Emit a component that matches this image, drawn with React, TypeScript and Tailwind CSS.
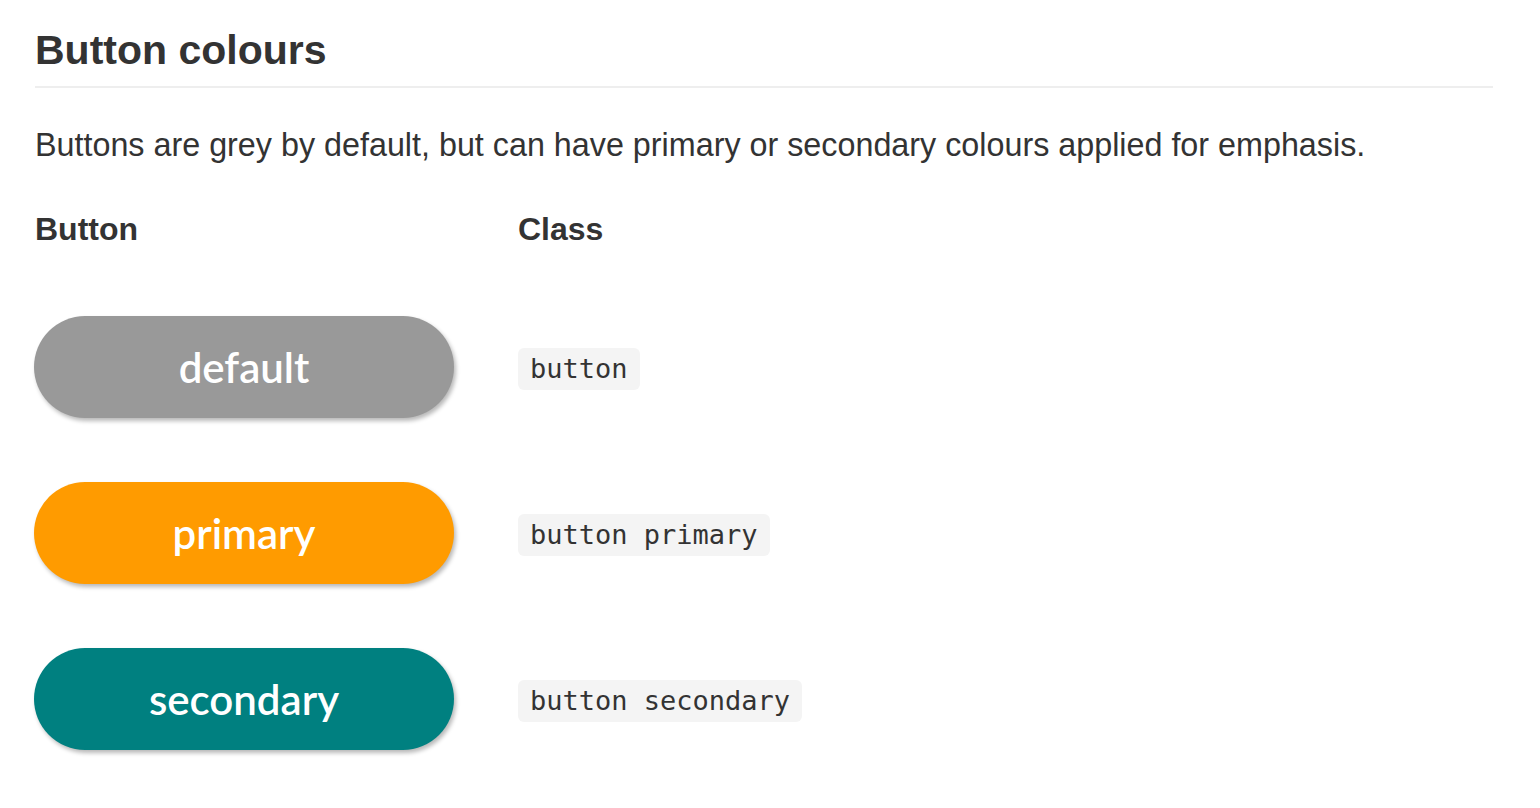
const ROWS = [
  { label: "default", cls: "button", bg: "bg-[#999999]" },
  { label: "primary", cls: "button primary", bg: "bg-[#ff9b00]" },
  { label: "secondary", cls: "button secondary", bg: "bg-[#008080]" },
];

export default function App() {
  return (
    <div className="min-h-screen bg-white px-[35px] pt-[26px] text-[#333333] font-['Liberation_Sans',Arial,sans-serif]">
      <div className="w-[1458px]">
        <h2 className="border-b-2 border-[#eeeeee] pb-[12px] text-[41px] font-bold leading-[48px]">
          Button colours
        </h2>
        <p className="mt-[37px] text-[32.3px] leading-[40px]">
          Buttons are grey by default, but can have primary or secondary colours applied for emphasis.
        </p>

        <div className="mt-[44px] grid grid-cols-[483px_1fr]">
          <div className="text-[32px] font-bold leading-[40px]">Button</div>
          <div className="text-[32px] font-bold leading-[40px]">Class</div>
        </div>

        <div className="mt-[67px] flex flex-col gap-[64px]">
          {ROWS.map((r) => (
            <div key={r.label} className="grid grid-cols-[483px_1fr] items-center">
              <button
                className={`-ml-px flex h-[102px] w-[420px] items-center justify-center rounded-full text-[42px] font-semibold font-['Lato',sans-serif] text-white shadow-[2px_3px_4px_rgba(0,0,0,0.28)] ${r.bg}`}
              >
                {r.label}
              </button>
              <div className="mt-[4px]">
                <code className="inline-block rounded-[6px] bg-[#f4f4f4] px-[12px] text-[27px] leading-[42px] text-[#333333] font-['DejaVu_Sans_Mono',monospace]">
                  {r.cls}
                </code>
              </div>
            </div>
          ))}
        </div>
      </div>
    </div>
  );
}
